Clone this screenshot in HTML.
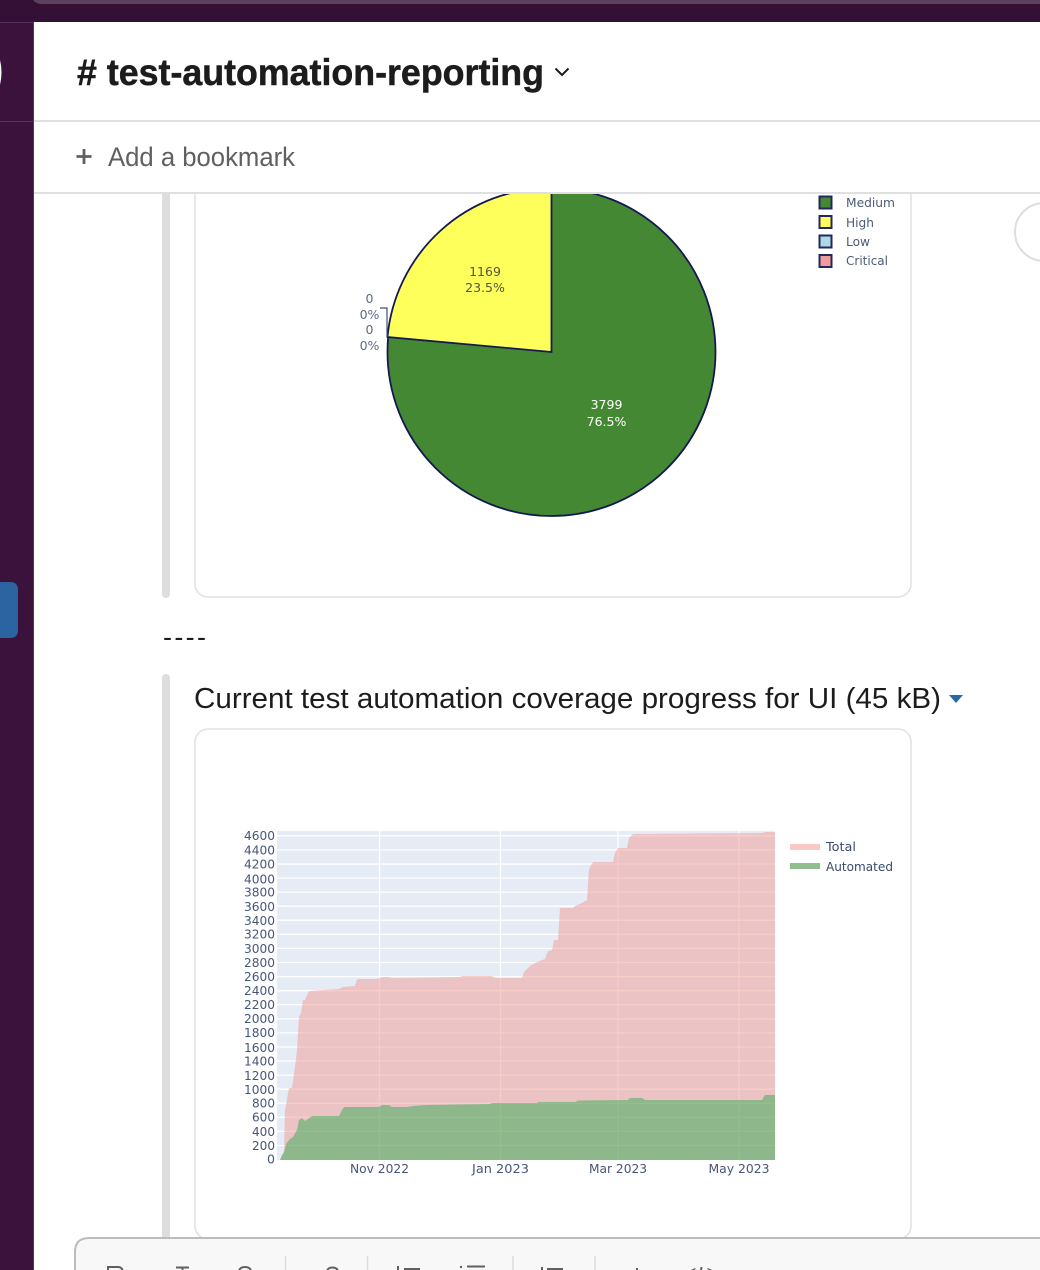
<!DOCTYPE html>
<html><head><meta charset="utf-8"><title>test-automation-reporting</title>
<style>
html,body{margin:0;padding:0;background:#fff;width:1040px;height:1270px;overflow:hidden}
svg{display:block;position:absolute;left:0;top:0}
.p{font-family:"DejaVu Sans",sans-serif;font-size:12px;fill:#2a3f5f}
.l{font-family:"Liberation Sans",sans-serif}
</style></head><body>
<svg width="1040" height="1270" viewBox="0 0 1040 1270" xmlns="http://www.w3.org/2000/svg">
<rect width="1040" height="1270" fill="#fff"/>

<!-- pie -->
<circle cx="551.500" cy="352" r="164" fill="#458833" stroke="#14194f" stroke-width="1.800"/>
<path d="M551.500 352L387.500 337A164 164 0 0 1 551.500 188Z" fill="#ffff5c" stroke="#14194f" stroke-width="1.800"/>
<path d="M380 308H387V337" fill="none" stroke="#3f4f70" stroke-width="1.200"/>
<g class="p" text-anchor="middle" style="font-size:12.500px">
<text x="485" y="276" style="fill:#55553a">1169</text>
<text x="485" y="292" style="fill:#55553a">23.5%</text>
<text x="606.500" y="409" style="fill:#fff">3799</text>
<text x="606.500" y="426" style="fill:#fff">76.5%</text>
<text x="369.500" y="303" style="fill:#5d6b85">0</text>
<text x="369.500" y="319" style="fill:#5d6b85">0%</text>
<text x="369.500" y="334" style="fill:#5d6b85">0</text>
<text x="369.500" y="350" style="fill:#5d6b85">0%</text>
</g>
<g stroke="#23285c" stroke-width="2">
<rect x="819.500" y="196.500" width="12" height="12" fill="#458833"/>
<rect x="819.500" y="216" width="12" height="12" fill="#ffff5c"/>
<rect x="819.500" y="235.500" width="12" height="12" fill="#add8e6"/>
<rect x="819.500" y="255" width="12" height="12" fill="#f29b9b"/>
</g>
<g class="p" style="font-size:12.500px">
<text x="846" y="207" textLength="49" lengthAdjust="spacingAndGlyphs" style="fill:#4c5b7a">Medium</text>
<text x="846" y="227" textLength="28" lengthAdjust="spacingAndGlyphs" style="fill:#4c5b7a">High</text>
<text x="846" y="246" textLength="24" lengthAdjust="spacingAndGlyphs" style="fill:#4c5b7a">Low</text>
<text x="846" y="265" textLength="42" lengthAdjust="spacingAndGlyphs" style="fill:#4c5b7a">Critical</text>
</g>

<!-- first card -->
<rect x="195" y="150" width="716" height="447" rx="13" fill="none" stroke="#e2e2e2" stroke-width="1.600"/>
<rect x="162" y="150" width="8" height="448" rx="4" fill="#dddddd"/>
<circle cx="1044" cy="232" r="29" fill="#fff" stroke="#dedede" stroke-width="2"/>

<text x="163" y="646" class="l" font-size="27" fill="#1d1c1d" textLength="43" lengthAdjust="spacing">----</text>

<!-- second attachment -->
<rect x="162" y="674" width="8" height="600" rx="4" fill="#dddddd"/>
<text x="194" y="708" class="l" font-size="29" fill="#1d1c1d" textLength="747" lengthAdjust="spacingAndGlyphs">Current test automation coverage progress for UI (45 kB)</text>
<path d="M949 695H963L956 703Z" fill="#2767ab"/>
<rect x="195" y="729" width="716" height="510" rx="13" fill="#fff" stroke="#e2e2e2" stroke-width="1.600"/>

<!-- area chart -->
<rect x="277" y="831" width="498" height="329" fill="#e5ecf6"/>
<g stroke="#fff" stroke-width="1.300">
<path d="M277 1145.500H775M277 1131.400H775M277 1117.300H775M277 1103.300H775M277 1089.200H775M277 1075.100H775M277 1061H775M277 1047H775M277 1032.900H775M277 1018.800H775M277 1004.700H775M277 990.700H775M277 976.600H775M277 962.500H775M277 948.400H775M277 934.400H775M277 920.300H775M277 906.200H775M277 892.100H775M277 878.100H775M277 864H775M277 849.900H775M277 835.800H775"/>
<path d="M379.500 831V1160M500.500 831V1160M618 831V1160M739 831V1160"/>
</g>
<path d="M280 1160L282 1156L284 1150L285 1110L289 1088L292 1088L296 1059L297 1050L299 1017L301 1013L303 1000L305 1000L309 991L339 989L343 987L355 986L357 979L377 979L383 977L389 977L391 978L460 977L462 976L492 976L495 978L522 978L524 972L530 966L537 962L545 959L548 951L552 950L554 940L558 940L560 908L573 908L575 906L582 903L587 900L589 869L593 862L613 862L615 853L618 848L627 848L629 838L633 834L762 833L765 832L775 832V1160Z" fill="#f19a94" fill-opacity=".5"/>
<path d="M280 1160L282 1155L284 1153L286 1144L290 1139L293 1137L297 1130L299 1120L302 1118L305 1121L308 1119L312 1116L339 1116L343 1108L345 1107L378 1107L383 1105L389 1105L392 1107L407 1107L413 1106L427 1105L490 1104L492 1103L537 1103L538 1102L575 1102L578 1100.500L628 1100L630 1098L642 1098L645 1100L762 1100L765 1095L775 1095V1160Z" fill="#20ad48" fill-opacity=".46"/>
<g class="p" text-anchor="end" style="font-size:12.500px;fill:#46567a">
<text x="275" y="840" textLength="31" lengthAdjust="spacingAndGlyphs">4600</text>
<text x="275" y="854.500" textLength="31" lengthAdjust="spacingAndGlyphs">4400</text>
<text x="275" y="868.500" textLength="31" lengthAdjust="spacingAndGlyphs">4200</text>
<text x="275" y="883.500" textLength="31" lengthAdjust="spacingAndGlyphs">4000</text>
<text x="275" y="896.500" textLength="31" lengthAdjust="spacingAndGlyphs">3800</text>
<text x="275" y="911" textLength="31" lengthAdjust="spacingAndGlyphs">3600</text>
<text x="275" y="925" textLength="31" lengthAdjust="spacingAndGlyphs">3400</text>
<text x="275" y="938.500" textLength="31" lengthAdjust="spacingAndGlyphs">3200</text>
<text x="275" y="953" textLength="31" lengthAdjust="spacingAndGlyphs">3000</text>
<text x="275" y="967" textLength="31" lengthAdjust="spacingAndGlyphs">2800</text>
<text x="275" y="981" textLength="31" lengthAdjust="spacingAndGlyphs">2600</text>
<text x="275" y="995" textLength="31" lengthAdjust="spacingAndGlyphs">2400</text>
<text x="275" y="1009" textLength="31" lengthAdjust="spacingAndGlyphs">2200</text>
<text x="275" y="1023" textLength="31" lengthAdjust="spacingAndGlyphs">2000</text>
<text x="275" y="1037" textLength="31" lengthAdjust="spacingAndGlyphs">1800</text>
<text x="275" y="1052" textLength="31" lengthAdjust="spacingAndGlyphs">1600</text>
<text x="275" y="1065.500" textLength="31" lengthAdjust="spacingAndGlyphs">1400</text>
<text x="275" y="1080" textLength="31" lengthAdjust="spacingAndGlyphs">1200</text>
<text x="275" y="1094" textLength="31" lengthAdjust="spacingAndGlyphs">1000</text>
<text x="275" y="1107.500" textLength="23" lengthAdjust="spacingAndGlyphs">800</text>
<text x="275" y="1121.500" textLength="23" lengthAdjust="spacingAndGlyphs">600</text>
<text x="275" y="1136" textLength="23" lengthAdjust="spacingAndGlyphs">400</text>
<text x="275" y="1150" textLength="23" lengthAdjust="spacingAndGlyphs">200</text>
<text x="275" y="1163.500">0</text>
</g>
<g class="p" text-anchor="middle" style="font-size:12.500px;fill:#46567a">
<text x="379.500" y="1173" textLength="59" lengthAdjust="spacingAndGlyphs">Nov 2022</text>
<text x="500.500" y="1173" textLength="57" lengthAdjust="spacingAndGlyphs">Jan 2023</text>
<text x="618" y="1173" textLength="58" lengthAdjust="spacingAndGlyphs">Mar 2023</text>
<text x="739" y="1173" textLength="61" lengthAdjust="spacingAndGlyphs">May 2023</text>
</g>
<rect x="790" y="844" width="30" height="6" fill="#f9c9c7"/>
<rect x="790" y="863" width="30" height="6" fill="#92bd8c"/>
<text x="826" y="851" class="p" style="font-size:12.500px;fill:#3a4a6c" textLength="30" lengthAdjust="spacingAndGlyphs">Total</text>
<text x="826" y="871" class="p" style="font-size:12.500px;fill:#3a4a6c" textLength="67" lengthAdjust="spacingAndGlyphs">Automated</text>

<!-- composer -->
<path d="M75 1272V1252Q75 1238 89 1238H1042V1272Z" fill="#f8f8f8" stroke="#bcbcbc" stroke-width="2"/>
<g fill="none" stroke="#dcdcdc" stroke-width="1.500"><path d="M285.500 1256V1270M367.500 1256V1270M513 1256V1270M595 1256V1270"/></g>
<g fill="none" stroke="#616061" stroke-width="2">
<path d="M108 1271V1267H118Q122 1267 122.500 1271"/>
<path d="M176 1267.500H189M182.500 1267.500V1271"/>
<path d="M239 1271Q240 1267 245 1267Q250 1267 251 1271"/>
<path d="M327 1271Q328 1267.500 332.500 1267.500Q337 1267.500 338 1271"/>
<path d="M404 1269H420"/>
<path d="M467 1266.500H485"/>
<path d="M547 1269H563"/>
</g>
<g fill="#616061">
<rect x="397" y="1266" width="2" height="4"/>
<circle cx="461" cy="1267" r="1.200"/>
<rect x="541" y="1267" width="2" height="3"/>
<rect x="636" y="1268" width="2" height="2"/>
<path d="M691 1270L695 1268L696 1269L694 1270ZM700.500 1267H702.500L702 1270H700ZM708 1268L712 1270H709L707 1269Z"/>
</g>

<!-- sidebar and top bar -->
<rect x="0" y="0" width="34" height="1270" fill="#3b123c"/>
<rect x="33" y="22" width="1" height="1248" fill="#5a3560"/>
<rect x="0" y="22" width="33" height="1" fill="#52305a"/>
<rect x="0" y="121" width="33" height="1" fill="#52305a"/>
<rect x="0" y="0" width="1040" height="22" fill="#340f36"/>
<path d="M33 0Q36 4 42 4H1040V0Z" fill="#5c4060"/>
<path d="M0 60Q3 72 0 85Z" fill="#fff"/>
<path d="M0 582H10Q18 582 18 590V630Q18 638 10 638H0Z" fill="#2b64a0"/>

<!-- header -->
<rect x="34" y="22" width="1006" height="171" fill="#fff"/>
<rect x="34" y="120" width="1006" height="2" fill="#e0e0e0"/>
<rect x="34" y="192" width="1006" height="2" fill="#e0e0e0"/>
<text x="77" y="85" class="l" font-size="37" font-weight="700" fill="#1d1c1d" stroke="#1d1c1d" stroke-width=".5" textLength="467" lengthAdjust="spacingAndGlyphs"># test-automation-reporting</text>
<path d="M555.500 68.500L562 75L568.500 68.500" fill="none" stroke="#1d1c1d" stroke-width="2"/>
<path d="M76.500 156.500H91.500M84 149V164" fill="none" stroke="#616061" stroke-width="2.800"/>
<text x="108" y="166" class="l" font-size="27" fill="#616061" textLength="187" lengthAdjust="spacingAndGlyphs">Add a bookmark</text>
</svg>
</body></html>
